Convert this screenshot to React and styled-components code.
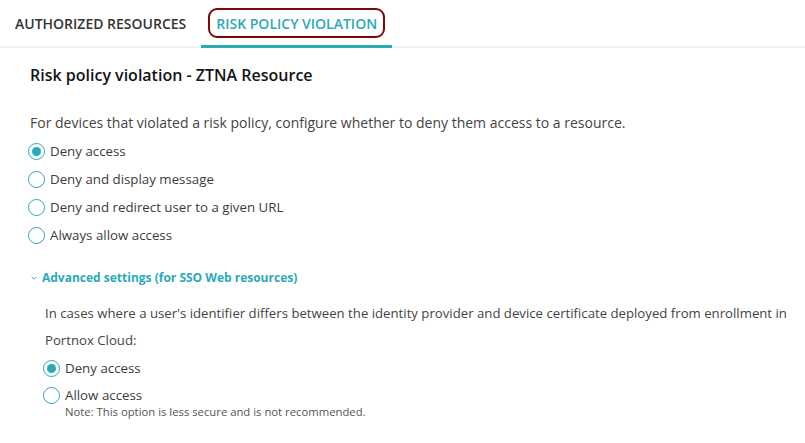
import React, { useState } from 'react';
import styled, { createGlobalStyle } from 'styled-components';

const GlobalStyle = createGlobalStyle`
  body {
    margin: 0;
    background: #ffffff;
    font-family: "Open Sans", "Liberation Sans", sans-serif;
    color: #3c3c3c;
  }
`;

const options = [
  'Deny access',
  'Deny and display message',
  'Deny and redirect user to a given URL',
  'Always allow access',
];

const Radio = ({ checked, onChange, children }) => (
  <RadioRow onClick={onChange}>
    <RadioCircle $checked={checked} />
    <RadioLabel>{children}</RadioLabel>
  </RadioRow>
);

const App = () => {
  const [tab, setTab] = useState(1);
  const [policy, setPolicy] = useState(0);
  const [mismatch, setMismatch] = useState(0);

  return (
    <Page>
      <GlobalStyle />
      <TabBar>
        <Tab $active={tab === 0} onClick={() => setTab(0)}>
          <TabText>AUTHORIZED RESOURCES</TabText>
        </Tab>
        <Tab $active={tab === 1} onClick={() => setTab(1)}>
          <TabText $highlight>RISK POLICY VIOLATION</TabText>
        </Tab>
      </TabBar>

      <Content>
        <Title>Risk policy violation - ZTNA Resource</Title>
        <Description>
          For devices that violated a risk policy, configure whether to deny them access to a resource.
        </Description>
        <RadioGroup>
          {options.map((label, i) => (
            <Radio key={label} checked={policy === i} onChange={() => setPolicy(i)}>
              {label}
            </Radio>
          ))}
        </RadioGroup>

        <Advanced>
          <Chevron viewBox="0 0 10 10">
            <path d="M2 3.5 L5 6.5 L8 3.5" fill="none" stroke="currentColor" strokeWidth="1.2" />
          </Chevron>
          Advanced settings (for SSO Web resources)
        </Advanced>

        <AdvancedBody>
          <Paragraph>
            In cases where a user's identifier differs between the identity provider and device certificate deployed from enrollment in Portnox Cloud:
          </Paragraph>
          <RadioGroup $tight>
            <Radio checked={mismatch === 0} onChange={() => setMismatch(0)}>
              Deny access
            </Radio>
            <RadioWithNote>
              <Radio checked={mismatch === 1} onChange={() => setMismatch(1)}>
                Allow access
              </Radio>
              <Note>Note: This option is less secure and is not recommended.</Note>
            </RadioWithNote>
          </RadioGroup>
        </AdvancedBody>
      </Content>
    </Page>
  );
};

export default App;

const Page = styled.div`
  width: 805px;
  min-height: 443px;
  background: #fff;
  overflow: hidden;
`;

const TabBar = styled.div`
  display: flex;
  height: 46px;
  border-bottom: 2px solid #efefef;
`;

const Tab = styled.div`
  display: flex;
  align-items: center;
  padding: 0 7px;
  margin-bottom: -2px;
  border-bottom: 3px solid ${(p) => (p.$active ? '#2aaab8' : 'transparent')};
  color: ${(p) => (p.$active ? '#2aaab8' : '#333333')};
  cursor: pointer;
`;

const TabText = styled.span`
  font-size: 14px;
  font-weight: 600;
  padding: 4px 6px 3px;
  margin-top: 1px;
  border: 2.5px solid ${(p) => (p.$highlight ? '#7a0a0a' : 'transparent')};
  border-radius: 9px;
`;

const Content = styled.div`
  padding: 16px 0 0 30px;
`;

const Title = styled.h2`
  margin: 0 0 27px;
  font-size: 16px;
  font-weight: 600;
  color: #141414;
  line-height: 22px;
`;

const Description = styled.p`
  margin: 0 0 8px;
  font-size: 14px;
  line-height: 20px;
  color: #444;
`;

const RadioGroup = styled.div`
  display: flex;
  flex-direction: column;
  gap: ${(p) => (p.$tight ? '7px' : '8px')};
`;

const RadioRow = styled.label`
  display: flex;
  align-items: center;
  gap: 5px;
  height: 20px;
  cursor: pointer;
  margin-left: -2px;
`;

const RadioCircle = styled.span`
  box-sizing: border-box;
  width: 17px;
  height: 17px;
  border-radius: 50%;
  border: 1.5px solid #2aaab8;
  display: flex;
  align-items: center;
  justify-content: center;
  background: #fff;

  &::after {
    content: '';
    width: 9px;
    height: 9px;
    border-radius: 50%;
    background: ${(p) => (p.$checked ? '#2aaab8' : 'transparent')};
  }
`;

const RadioLabel = styled.span`
  font-size: 13.3px;
  color: #3c3c3c;
`;

const Advanced = styled.div`
  display: flex;
  align-items: center;
  gap: 4px;
  margin-top: 24px;
  font-size: 12px;
  font-weight: 700;
  color: #2aaab8;
`;

const Chevron = styled.svg`
  width: 8px;
  height: 8px;
  color: #2aaab8;
`;

const AdvancedBody = styled.div`
  padding-left: 15px;
  margin-top: 14px;
`;

const Paragraph = styled.p`
  margin: 0 0 4px;
  font-size: 13.2px;
  line-height: 27px;
  color: #444;
`;

const RadioWithNote = styled.div`
  display: flex;
  flex-direction: column;
`;

const Note = styled.div`
  padding-left: 20px;
  font-size: 11.3px;
  color: #555;
  line-height: 14px;
`;
